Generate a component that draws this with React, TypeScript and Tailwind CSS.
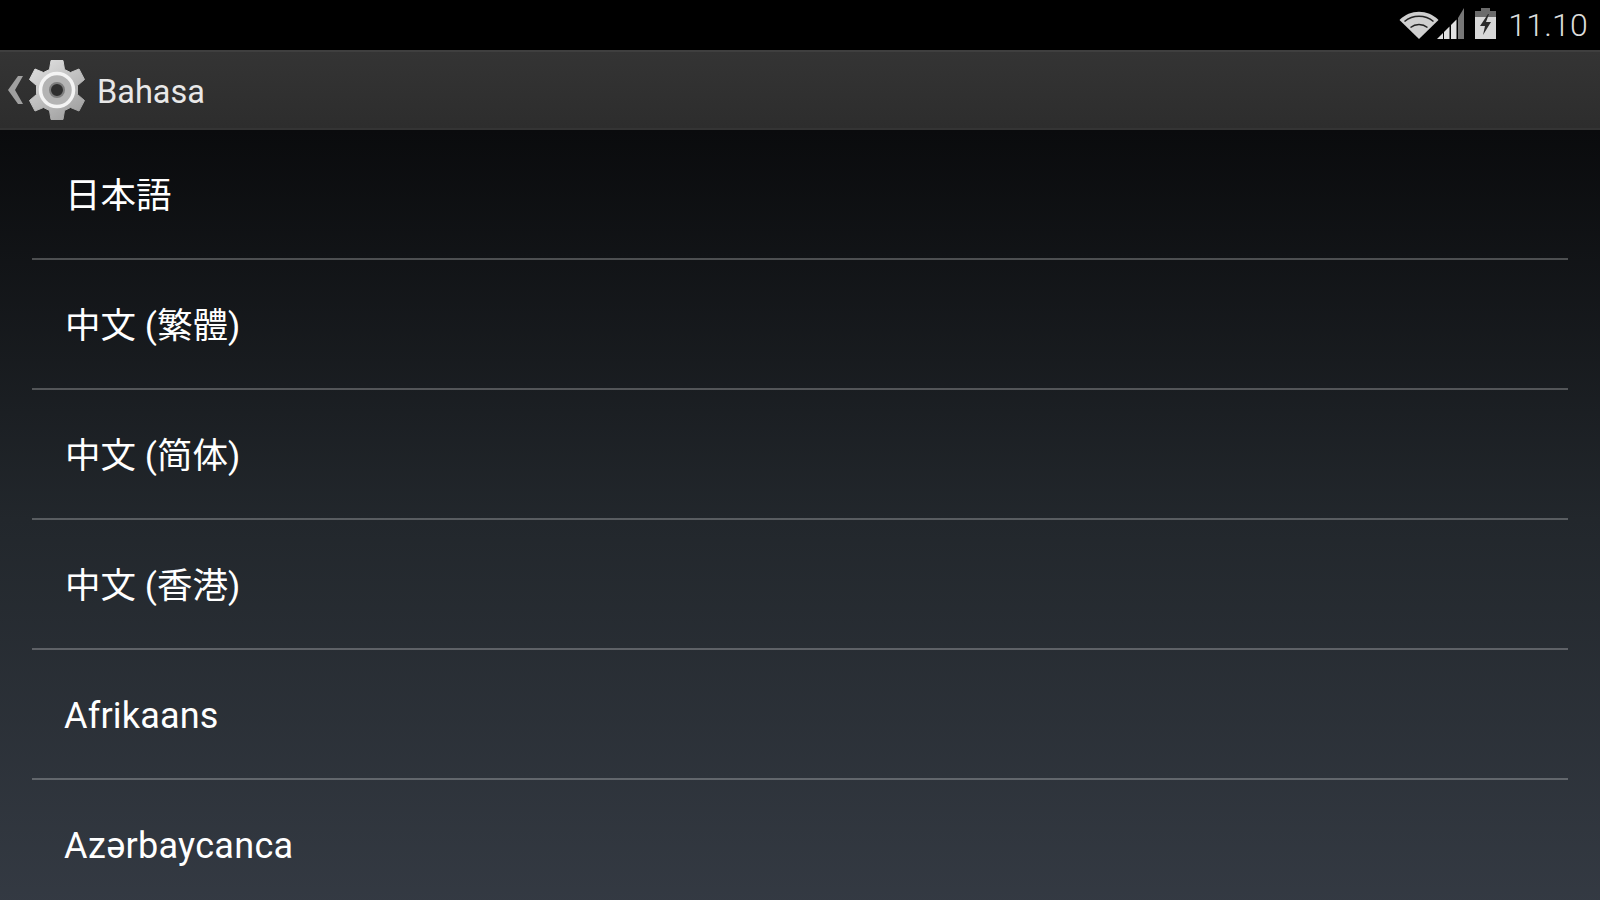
const languages = [
  { name: "日本語", className: "pl-[33px] pt-[6px] text-[35.5px]" },
  { name: "中文 (繁體)", className: "pl-[33px] pt-[6px] text-[35.5px]" },
  { name: "中文 (简体)", className: "pl-[33px] pt-[6px] text-[35.5px]" },
  { name: "中文 (香港)", className: "pl-[33px] pt-[6px] text-[35.5px]" },
  { name: "Afrikaans", className: "pl-[32px] pt-[4px] text-[36px] tracking-[0.2px]" },
  { name: "Azərbaycanca", className: "pl-[32px] pt-[4px] text-[36px] tracking-[0.3px]" },
];

const WifiIcon = () => (
  <svg width="40" height="28" viewBox="0 0 40 28">
    <path d="M0.5 9C11 -2 29 -2 39.5 9L20 28Z" fill="#cfcfcf" />
    <path d="M5.5 10.5C14 3.5 26 3.5 34.5 10.5" fill="none" stroke="#222222" strokeWidth="1.6" />
    <path d="M11.5 16.5C16.5 12.5 23.5 12.5 28.5 16.5" fill="none" stroke="#222222" strokeWidth="1.6" />
  </svg>
);

const SignalIcon = () => (
  <svg width="27" height="31" viewBox="0 0 27 31">
    <path d="M0 31L6 25V31Z" fill="#e0e0e0" />
    <path d="M7 24L12.5 18.5V31H7Z" fill="#e0e0e0" />
    <path d="M14 17L19.5 11.5V31H14Z" fill="#e0e0e0" />
    <path d="M21 10L27 0V31H21Z" fill="#777777" />
  </svg>
);

const BatteryIcon = () => (
  <svg width="21" height="31" viewBox="0 0 21 31">
    <path d="M6 0H15V3H21V31H0V3H6Z" fill="#d8d8d8" />
    <path d="M6 0H15V3H21V9H0V3H6Z" fill="#6b6b6b" />
    <path d="M13 6L5 18H10L8 27L16 14H11L14 6Z" fill="#2a2a2a" />
  </svg>
);

const GearIcon = () => (
  <svg width="56" height="60" viewBox="0 0 56 60">
    <defs>
      <linearGradient id="gear" x1="0" y1="0" x2="0.6" y2="1">
        <stop offset="0" stopColor="#e4e4e4" />
        <stop offset="1" stopColor="#a4a4a4" />
      </linearGradient>
    </defs>
    <path
      d="M22 0.5H34L35.5 9.5L41.5 12.5L50 9L55.5 19.5L48.5 25.5V34.5L55.5 40.5L50 51L41.5 47.5L35.5 50.5L34 59.5H22L20.5 50.5L14.5 47.5L6 51L0.5 40.5L7.5 34.5V25.5L0.5 19.5L6 9L14.5 12.5L20.5 9.5Z"
      fill="url(#gear)"
      stroke="url(#gear)"
      strokeWidth="1"
      strokeLinejoin="round"
    />
    <circle cx="28" cy="30" r="16.5" fill="#b4b4b4" stroke="#f4f4f4" strokeWidth="3.5" />
    <circle cx="28" cy="30" r="7" fill="#2f2f2f" stroke="#7e7e7e" strokeWidth="2" />
  </svg>
);

export default function App() {
  return (
    <div className="flex h-[900px] w-[1600px] flex-col overflow-hidden bg-black font-['Roboto','Noto_Sans_CJK_JP',sans-serif]">
      <div className="flex h-[50px] shrink-0 items-center justify-end bg-black pr-[12px]">
        <div className="mb-[3px] flex items-end">
          <WifiIcon />
          <div className="-ml-[2px]">
            <SignalIcon />
          </div>
        </div>
        <div className="mb-[3px] ml-[11px]">
          <BatteryIcon />
        </div>
        <span className="ml-[12px] text-[32px] font-light leading-none tracking-[0.2px] text-[#dcdcdc]">11.10</span>
      </div>

      <div className="flex h-[80px] shrink-0 items-center border-t-2 border-b-2 border-t-[#3f3f3f] border-b-[#343434] bg-gradient-to-b from-[#343434] to-[#2d2d2d]">
        <svg className="ml-[8px]" width="15" height="28" viewBox="0 0 15 28">
          <path d="M10 0H15L7 14L15 28H10L0 14Z" fill="#a0a0a0" />
        </svg>
        <div className="ml-[6px]">
          <GearIcon />
        </div>
        <span className="ml-[12px] mt-[5px] text-[32.5px] leading-none text-[#e8e8e8]">Bahasa</span>
      </div>

      <div className="flex-1 bg-gradient-to-b from-[#0a0b0d] via-[#22272c] to-[#343a43]">
        {languages.map((lang) => (
          <div
            key={lang.name}
            className={`mx-8 flex h-[130px] items-center border-b-2 border-white/25 text-white ${lang.className}`}
          >
            {lang.name}
          </div>
        ))}
      </div>
    </div>
  );
}
